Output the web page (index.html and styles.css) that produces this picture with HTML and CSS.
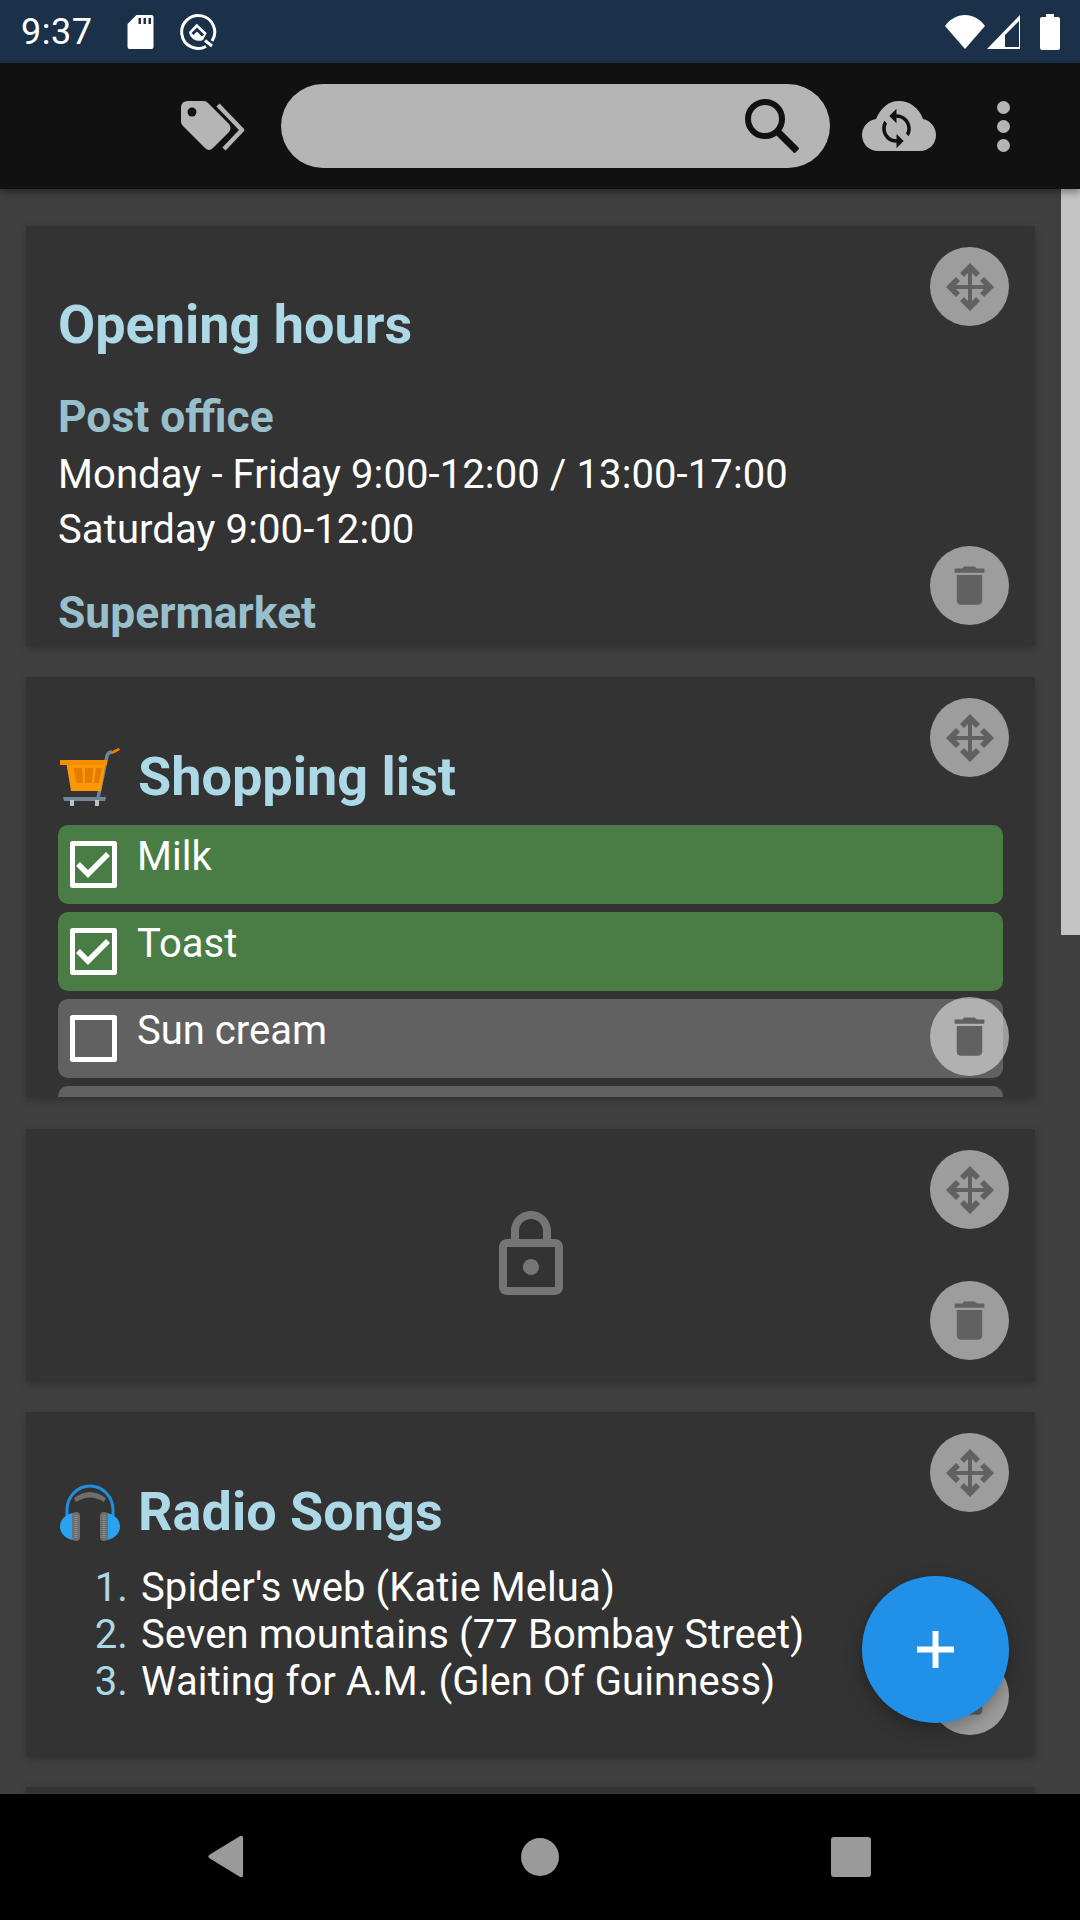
FILE: index.html
```html
<!DOCTYPE html>
<html lang="en">
<head>
    <meta charset="UTF-8">
    <meta name="viewport" content="width=device-width, initial-scale=1.0">
    <title>Notes</title>
    <link rel="stylesheet" href="styles.css">
</head>
<body>
    <svg class="defs" width="0" height="0">
        <symbol id="move" viewBox="0 0 48 48">
            <path d="M24 0 34 10 30 14 26 10V22H38L34 18 38 14 48 24 38 34 34 30 38 26H26V38L30 34 34 38 24 48 14 38 18 34 22 38V26H10L14 30 10 34 0 24 10 14 14 18 10 22H22V10L18 14 14 10Z"/>
        </symbol>
        <symbol id="trash" viewBox="0 0 24 24">
            <path d="M6 19c0 1.1.9 2 2 2h8c1.1 0 2-.9 2-2V7H6v12zM19 4h-3.5l-1-1h-5l-1 1H5v2h14V4z"/>
        </symbol>
        <symbol id="tick" viewBox="0 0 47 47">
            <path d="M2.500 2.500h42v42h-42z" fill="none" stroke="#fff" stroke-width="5" stroke-linejoin="round"/>
            <path d="M8 23l10 10 20-20" fill="none" stroke="#fff" stroke-width="5.500"/>
        </symbol>
        <symbol id="box" viewBox="0 0 47 47">
            <path d="M2.500 2.500h42v42h-42z" fill="none" stroke="#fff" stroke-width="5" stroke-linejoin="round"/>
        </symbol>
    </svg>

    <header class="status-bar">
        <span class="clock">9:37</span>
        <svg class="st-sd" viewBox="0 0 26 34"><path d="M9 0h15a2 2 0 0 1 2 2v30a2 2 0 0 1-2 2H2a2 2 0 0 1-2-2V9zM11 3v6h2.500V3zM16 3v6h2.500V3zM21 3v6h2.500V3z" fill="#fff" fill-rule="evenodd"/></svg>
        <svg class="st-q" viewBox="0 0 38 38">
            <path d="M27 33.500A16.500 16.500 0 1 1 33 28" fill="none" stroke="#fff" stroke-width="3"/>
            <path d="M10 19 17.700 10.700 27.700 20 24 27A10 10 0 0 1 10 19z" fill="#fff"/>
            <path d="M13.500 21 18 16.500 24 22.500" fill="none" stroke="#1b3149" stroke-width="3"/>
            <path d="M26 27.500 33 33" stroke="#fff" stroke-width="3"/>
        </svg>
        <span class="st-space"></span>
        <svg class="st-wifi" viewBox="0 0 40 34"><path d="M0 11C5 4 12 0 20 0s15 4 20 11L20 34z" fill="#fff"/></svg>
        <svg class="st-signal" viewBox="0 0 34 34"><path d="M33 0v34H0zM32 6 18 20v12h14z" fill="#fff" fill-rule="evenodd"/></svg>
        <svg class="st-batt" viewBox="0 0 20 36"><path d="M6 0h8v3h4a2 2 0 0 1 2 2v29a2 2 0 0 1-2 2H2a2 2 0 0 1-2-2V5a2 2 0 0 1 2-2h4z" fill="#fff"/></svg>
    </header>

    <nav class="toolbar">
        <svg class="tb-tag" viewBox="0 0 64 50">
            <path d="M7 0h16q2 0 4 2l21 21q3 4 0 8L32 47q-4 4-8 0L2 25q-2-2-2-4V7q0-7 7-7z" fill="#b5b5b5"/>
            <circle cx="11" cy="11" r="4.500" fill="#111"/>
            <path d="M37 4 61 29 43 48" fill="none" stroke="#b5b5b5" stroke-width="4.500" stroke-linejoin="round"/>
        </svg>
        <div class="search">
            <svg class="search-icon" viewBox="0 0 54 54"><circle cx="20" cy="20" r="17" fill="none" stroke="#111" stroke-width="6"/><path d="M33 33l19 19" stroke="#111" stroke-width="7"/></svg>
        </div>
        <svg class="tb-cloud" viewBox="0 0 74 50">
            <path d="M16 50C7 50 0 43 0 34c0-8 6-15 14-16C19 7 26 0 37 0s20 7 24 18c7 1 13 8 13 16 0 9-7 16-16 16z" fill="#b5b5b5"/>
            <svg x="13" y="6" width="43" height="43" viewBox="0 0 24 24"><path fill="#111" d="M12 4V1L8 5l4 4V6c3.310 0 6 2.690 6 6 0 1.010-.25 1.970-.7 2.800l1.460 1.460C19.540 15.030 20 13.570 20 12c0-4.420-3.580-8-8-8zm0 14c-3.310 0-6-2.690-6-6 0-1.010.25-1.970.7-2.800L5.240 7.740C4.460 8.970 4 10.430 4 12c0 4.420 3.580 8 8 8v3l4-4-4-4v3z"/></svg>
        </svg>
        <div class="tb-dots"><i></i><i></i><i></i></div>
    </nav>

    <main class="board">
        <section class="card card-hours">
            <h1>Opening hours</h1>
            <h2>Post office</h2>
            <p>Monday - Friday 9:00-12:00 / 13:00-17:00<br>Saturday 9:00-12:00</p>
            <h2>Supermarket</h2>
            <button class="action action-move"><svg><use href="#move"/></svg></button>
            <button class="action action-trash"><svg><use href="#trash"/></svg></button>
        </section>

        <section class="card card-shop">
            <h1 class="title-icon">
                <svg class="emoji" viewBox="0 0 60 58">
                    <path d="M38 50 47 8q1-4 5-4" fill="none" stroke="#6f8794" stroke-width="3.500"/>
                    <path d="M51 4q4-3 8-4l1 2q-3 2-8 4z" fill="#ef7d00"/>
                    <path d="M6 13H46L41 43H11z" fill="#ff9800"/>
                    <path d="M0 12H47V17H0z" fill="#f58f00"/>
                    <path d="M14 20h8l1 15h-7zM25 20h8l-1 15h-7zM36 20h6l-3 15h-5z" fill="#e57c00"/>
                    <path d="M3 49H45l-2-4 3 5-1 3H4z" fill="#6f8794"/>
                    <path d="M10 52h4v6h-4zM35 52h4v6h-4z" fill="#b8c2c8"/>
                </svg>
                <span>Shopping list</span>
            </h1>
            <div class="check-row done"><svg class="check"><use href="#tick"/></svg><span>Milk</span></div>
            <div class="check-row done"><svg class="check"><use href="#tick"/></svg><span>Toast</span></div>
            <div class="check-row"><svg class="check"><use href="#box"/></svg><span>Sun cream</span></div>
            <div class="check-row"></div>
            <button class="action action-move"><svg><use href="#move"/></svg></button>
            <button class="action action-trash"><svg><use href="#trash"/></svg></button>
        </section>

        <section class="card card-locked">
            <svg class="lock" viewBox="0 0 24 24"><path d="M18 8h-1V6c0-2.760-2.240-5-5-5S7 3.240 7 6v2H6c-1.100 0-2 .9-2 2v10c0 1.100.9 2 2 2h12c1.100 0 2-.9 2-2V10c0-1.100-.9-2-2-2zM9 6c0-1.660 1.340-3 3-3s3 1.340 3 3v2H9V6zm9 14H6V10h12v10zm-6-3c1.100 0 2-.9 2-2s-.9-2-2-2-2 .9-2 2 .9 2 2 2z"/></svg>
            <button class="action action-move"><svg><use href="#move"/></svg></button>
            <button class="action action-trash"><svg><use href="#trash"/></svg></button>
        </section>

        <section class="card card-songs">
            <h1 class="title-icon">
                <svg class="emoji" viewBox="0 0 60 58">
                    <path d="M7 34V27a23 24 0 0 1 46 0v7" fill="none" stroke="#1f8fe0" stroke-width="3"/>
                    <path d="M14 15q16-12 32 0l-2 4q-14-9-28 0z" fill="#6e6e6e"/>
                    <path d="M14 30v27C5 56 0 50 0 43.500S5 31 14 30zM46 30v27c9-1 14-7 14-13.500S55 31 46 30z" fill="#29a3f0"/>
                    <rect x="12" y="29" width="8" height="29" rx="4" fill="#6e6e6e"/>
                    <rect x="40" y="29" width="8" height="29" rx="4" fill="#6e6e6e"/>
                    <path d="M16 32v23M44 32v23" stroke="#8c8c8c" stroke-width="3" stroke-dasharray="1 1"/>
                </svg>
                <span>Radio Songs</span>
            </h1>
            <ol>
                <li>Spider's web (Katie Melua)</li>
                <li>Seven mountains (77 Bombay Street)</li>
                <li>Waiting for A.M. (Glen Of Guinness)</li>
            </ol>
            <button class="action action-move"><svg><use href="#move"/></svg></button>
            <button class="action action-trash"><svg><use href="#trash"/></svg></button>
        </section>

        <section class="card card-next"></section>

        <div class="scrollbar"></div>
        <button class="fab"><svg viewBox="0 0 37 37"><path d="M15.500 0h6v15.500H37v6H21.500V37h-6V21.500H0v-6h15.500z" fill="#fff"/></svg></button>
    </main>

    <footer class="nav-bar">
        <svg class="nav-back" viewBox="0 0 36 44"><path d="M33 1 2 20q-3 2 0 4l31 19q3 1 3-2V3q0-3-3-2z" fill="#9a9a9a"/></svg>
        <span class="nav-home"></span>
        <span class="nav-recent"></span>
    </footer>
</body>
</html>
```

FILE: styles.css
```css
* {
    box-sizing: border-box;
}
html, body {
    margin: 0;
    padding: 0;
}
body {
    width: 1080px;
    height: 1920px;
    overflow: hidden;
    display: flex;
    flex-direction: column;
    background: #404040;
    font-family: Roboto, "Noto Sans", sans-serif;
    color: #fff;
}
.defs {
    position: absolute;
}

/* status bar */
.status-bar {
    height: 63px;
    flex: none;
    display: flex;
    align-items: center;
    padding: 0 20px 0 21px;
    background: #1b3149;
}
.clock {
    font-size: 36px;
    width: 106px;
    letter-spacing: 0.5px;
}
.st-sd {
    width: 27px;
    height: 34px;
    margin-right: 25px;
}
.st-q {
    width: 38px;
    height: 38px;
}
.st-space {
    flex: 1;
}
.st-wifi {
    width: 40px;
    height: 34px;
    margin-right: 2px;
}
.st-signal {
    width: 34px;
    height: 34px;
    margin-right: 19px;
}
.st-batt {
    width: 20px;
    height: 36px;
}

/* toolbar */
.toolbar {
    height: 126px;
    flex: none;
    position: relative;
    z-index: 2;
    display: flex;
    align-items: center;
    padding-left: 181px;
    background: #111;
    box-shadow: 0 3px 8px rgba(0, 0, 0, 0.4);
}
.tb-tag {
    width: 64px;
    height: 50px;
    margin-right: 36px;
}
.search {
    width: 549px;
    height: 84px;
    border-radius: 42px;
    background: #b5b5b5;
    display: flex;
    align-items: center;
    justify-content: flex-end;
    padding-right: 31px;
    margin-right: 32px;
}
.search-icon {
    width: 54px;
    height: 54px;
}
.tb-cloud {
    width: 74px;
    height: 50px;
    margin-right: 61px;
}
.tb-dots {
    display: flex;
    flex-direction: column;
    gap: 6px;
}
.tb-dots i {
    display: block;
    width: 13px;
    height: 13px;
    border-radius: 50%;
    background: #b5b5b5;
}

/* board */
.board {
    flex: 1;
    position: relative;
    overflow: hidden;
    padding: 37px 45px 0 26px;
    display: flex;
    flex-direction: column;
    gap: 31px;
    background: #404040;
}
.card {
    flex: none;
    position: relative;
    overflow: hidden;
    padding: 0 32px;
    background: #333;
    box-shadow: 0 3px 8px rgba(0, 0, 0, 0.25);
}
.card-hours, .card-shop {
    height: 420px;
}
.card-locked {
    height: 252px;
    margin-top: 1px;
    display: flex;
    align-items: center;
    justify-content: center;
}
.card-songs {
    height: 344px;
}
.card-next {
    height: 60px;
}
h1 {
    margin: 0;
    font-size: 54px;
    line-height: 56px;
    font-weight: 700;
    color: #add8e6;
}
h2 {
    margin: 0;
    font-size: 44.4px;
    line-height: 48px;
    font-weight: 700;
    color: #98bfcc;
}
p {
    margin: 0;
    font-size: 40px;
    line-height: 55px;
    letter-spacing: 0.1px;
}
.card-hours h1 {
    padding-top: 71px;
    margin-bottom: 40px;
}
.card-hours p {
    margin: 6px 0 32px;
}
.title-icon {
    display: flex;
    align-items: center;
    gap: 18px;
    padding-top: 71px;
}
.emoji {
    width: 60px;
    height: 58px;
    flex: none;
    margin-left: 2px;
}

/* checklist */
.card-shop .title-icon {
    margin-bottom: 19px;
}
.check-row {
    height: 79px;
    margin-bottom: 8px;
    padding: 13px 12px;
    border-radius: 10px;
    background: #616161;
    display: flex;
    align-items: flex-start;
    gap: 20px;
    font-size: 40px;
    line-height: 38px;
}
.check-row.done {
    background: #4a7c46;
}
.check {
    width: 47px;
    height: 47px;
    flex: none;
    margin-top: 3px;
}

/* locked note */
.lock {
    width: 96px;
    height: 96px;
    fill: #757575;
}

/* song list */
ol {
    margin: 23px 0 0;
    padding-left: 80px;
    font-size: 40px;
    line-height: 47px;
    letter-spacing: 0.1px;
}
li {
    padding-left: 3px;
}
li::marker {
    color: #add8e6;
}

/* round actions */
.action {
    position: absolute;
    right: 26px;
    width: 79px;
    height: 79px;
    padding: 0;
    border: 0;
    border-radius: 50%;
    background: rgba(238, 238, 238, 0.57);
    display: flex;
    align-items: center;
    justify-content: center;
}
.action svg {
    fill: #616161;
}
.action-move {
    top: 21px;
}
.action-move svg {
    width: 48px;
    height: 48px;
}
.action-trash {
    bottom: 21px;
}
.action-trash svg {
    width: 51px;
    height: 51px;
}
.fab {
    position: absolute;
    left: 862px;
    top: 1387px;
    width: 147px;
    height: 147px;
    padding: 0;
    border: 0;
    border-radius: 50%;
    background: #2090e9;
    box-shadow: 0 6px 18px rgba(0, 0, 0, 0.3);
    display: flex;
    align-items: center;
    justify-content: center;
}
.fab svg {
    width: 37px;
    height: 37px;
}
.scrollbar {
    position: absolute;
    top: 0;
    right: 0;
    width: 19px;
    height: 746px;
    background: #c4c4c4;
}

/* bottom nav */
.nav-bar {
    height: 126px;
    flex: none;
    position: relative;
    z-index: 2;
    background: #000;
}
.nav-back {
    position: absolute;
    left: 207px;
    top: 41px;
    width: 37px;
    height: 43px;
}
.nav-home {
    position: absolute;
    left: 521px;
    top: 44px;
    width: 38px;
    height: 38px;
    border-radius: 50%;
    background: #9a9a9a;
}
.nav-recent {
    position: absolute;
    left: 831px;
    top: 43px;
    width: 40px;
    height: 40px;
    border-radius: 3px;
    background: #9a9a9a;
}
```
